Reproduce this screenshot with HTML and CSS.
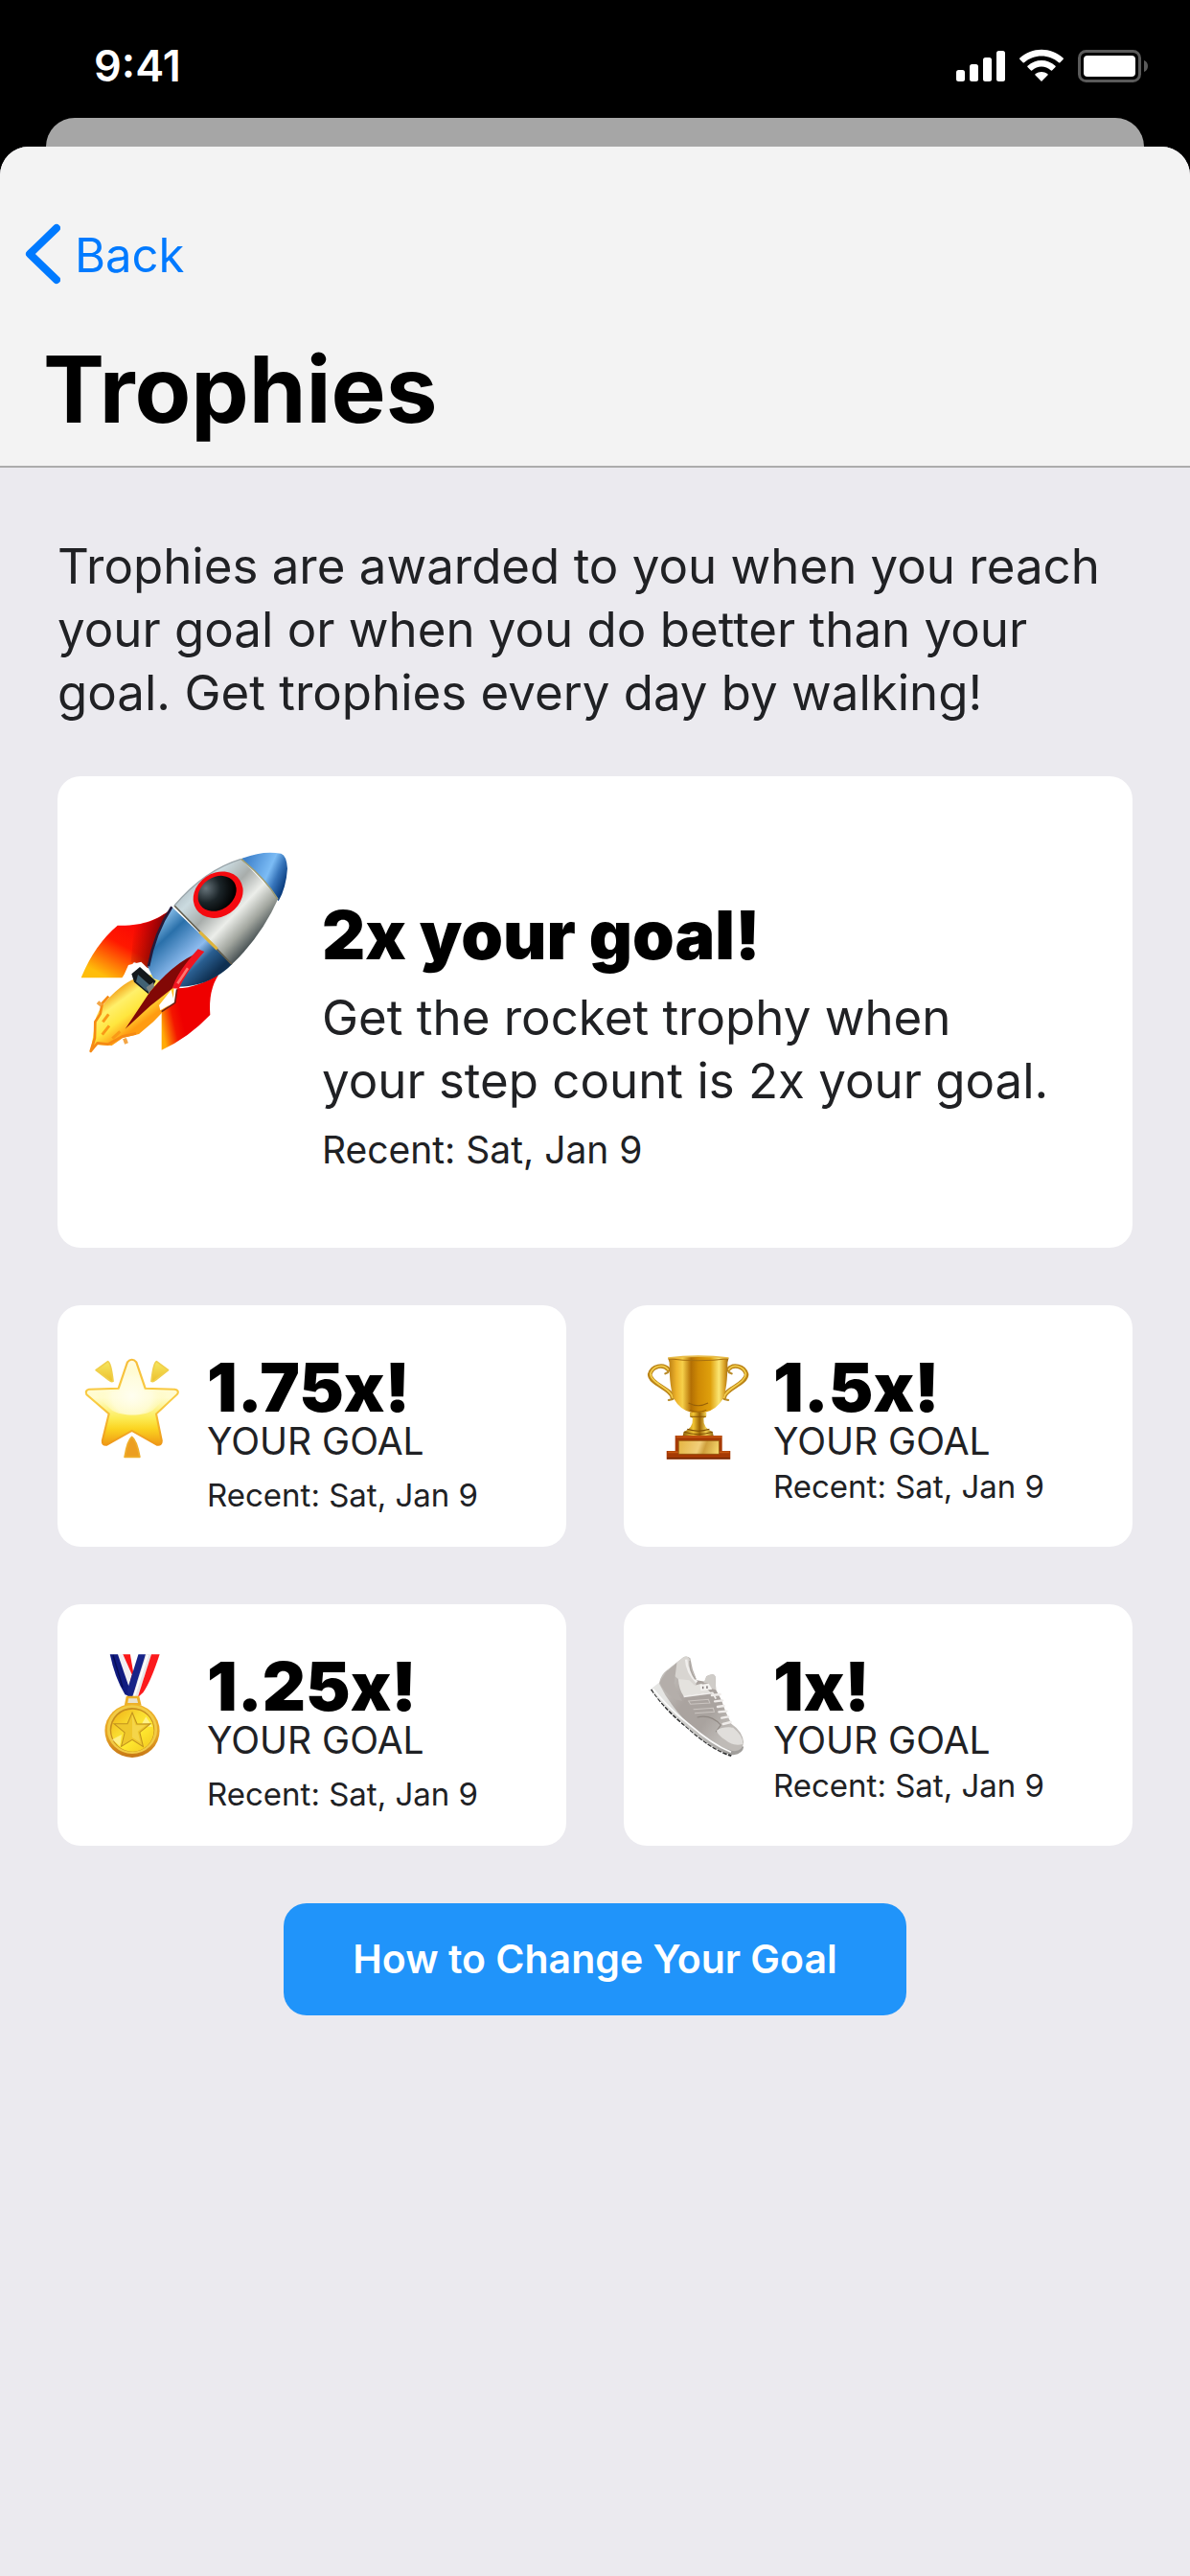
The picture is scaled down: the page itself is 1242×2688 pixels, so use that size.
FILE: index.html
```html
<!DOCTYPE html>
<html lang="en">
<head>
<meta charset="utf-8">
<meta name="viewport" content="width=device-width, initial-scale=1">
<title>Trophies</title>
<link rel="stylesheet" href="styles.css">
</head>
<body>
<div class="screen">
  <div class="status-bar">
    <span class="status-time">9:41</span>
    <svg class="status-icons" width="204" height="36" viewBox="0 0 204 36" role="img" aria-label="Signal, Wi-Fi and battery">
      <g fill="#fff">
        <rect x="2" y="22" width="9" height="12" rx="2.5"/>
        <rect x="16" y="16" width="9" height="18" rx="2.5"/>
        <rect x="30" y="9" width="9" height="25" rx="2.5"/>
        <rect x="44" y="2" width="9" height="32" rx="2.5"/>
        <path d="M91 34 L84.6 27.600Q83.800 26.800 84.700 26.100C88.500 23.200 93.500 23.200 97.300 26.100Q98.200 26.800 97.400 27.600Z"/>
        <path d="M76.500 19Q75.800 18.400 76.500 17.800C84.800 10 97.200 10 105.500 17.800Q106.200 18.400 105.500 19L102.300 22.300Q101.600 23 100.900 22.400C95 17.300 87 17.300 81.100 22.400Q80.400 23 79.700 22.300Z"/>
        <path d="M68.400 11Q67.700 10.300 68.400 9.600C81 -2.200 101 -2.200 113.600 9.600Q114.300 10.300 113.600 11L110.400 14.300Q109.700 14.900 109 14.300C99 5.200 83 5.200 73 14.300Q72.300 14.900 71.600 14.300Z"/>
        <rect x="135" y="7" width="54" height="22" rx="4"/>
      </g>
      <rect x="130.500" y="2.500" width="63" height="31" rx="7" fill="none" stroke="#5a5a5a" stroke-width="3"/>
      <path d="M198 12C201 13 202 15.500 202 18S201 23 198 24Z" fill="#5a5a5a"/>
    </svg>
  </div>
  <div class="sheet-behind"></div>
  <div class="sheet">
    <header class="nav">
      <a class="back" href="#">
        <svg width="38" height="64" viewBox="0 0 38 64" fill="none" stroke="#007aff" stroke-width="8" stroke-linecap="round" stroke-linejoin="round" aria-hidden="true"><path d="M34 5 6 32 34 59"/></svg>
        <span>Back</span>
      </a>
      <h1 class="page-title">Trophies</h1>
    </header>
    <main class="content">
      <p class="intro">Trophies are awarded to you when you reach your goal or when you do better than your goal. Get trophies every day by walking!</p>

      <div class="cards">
        <section class="card card-large">
          <svg class="rocket" viewBox="72 262 648 636" aria-hidden="true">
            <defs>
              <linearGradient id="hull" x1="420" y1="330" x2="640" y2="540" gradientUnits="userSpaceOnUse"><stop offset="0" stop-color="#a9b6bd"/><stop offset=".2" stop-color="#cbdbe0"/><stop offset=".42" stop-color="#a8adab"/><stop offset=".62" stop-color="#eceeea"/><stop offset=".8" stop-color="#a2a69f"/><stop offset="1" stop-color="#333e42"/></linearGradient>
              <linearGradient id="tail" x1="320" y1="470" x2="490" y2="650" gradientUnits="userSpaceOnUse"><stop offset="0" stop-color="#8fc4ee"/><stop offset=".25" stop-color="#2a70aa"/><stop offset=".62" stop-color="#8dbbee"/><stop offset=".78" stop-color="#2a5f91"/><stop offset="1" stop-color="#0f3052"/></linearGradient>
              <linearGradient id="nose" x1="590" y1="290" x2="725" y2="350" gradientUnits="userSpaceOnUse"><stop offset="0" stop-color="#3f82cc"/><stop offset=".55" stop-color="#7cbcf5"/><stop offset=".75" stop-color="#3775bb"/><stop offset="1" stop-color="#063778"/></linearGradient>
              <linearGradient id="finA" x1="270" y1="490" x2="170" y2="670" gradientUnits="userSpaceOnUse"><stop offset="0" stop-color="#f90505"/><stop offset=".45" stop-color="#ff1800"/><stop offset="1" stop-color="#ffbd0a"/></linearGradient>
              <linearGradient id="finShade" x1="230" y1="540" x2="345" y2="570" gradientUnits="userSpaceOnUse"><stop offset="0" stop-color="#700" stop-opacity="0"/><stop offset="1" stop-color="#4a0008"/></linearGradient>
              <linearGradient id="finB" x1="322" y1="800" x2="390" y2="785" gradientUnits="userSpaceOnUse"><stop offset="0" stop-color="#ffab05"/><stop offset=".6" stop-color="#f41500"/><stop offset="1" stop-color="#ef0000"/></linearGradient>
              <radialGradient id="port" cx="480" cy="365" r="90" gradientUnits="userSpaceOnUse"><stop offset="0" stop-color="#66737a"/><stop offset=".5" stop-color="#1b2428"/><stop offset="1" stop-color="#000"/></radialGradient>
              <linearGradient id="flame" x1="190" y1="690" x2="270" y2="800" gradientUnits="userSpaceOnUse"><stop offset="0" stop-color="#f3a119"/><stop offset=".3" stop-color="#fff06a"/><stop offset=".65" stop-color="#ffe63e"/><stop offset="1" stop-color="#ff9c12"/></linearGradient>
            </defs>
            <path d="M235 668C190 690 130 750 120 790L104 892 122 872 170 874 205 850 255 838 300 800 362 735 365 690 300 650Z" fill="url(#flame)"/>
            <path d="M160 720 140 742 134 775 118 800 117 850 104 892 125 866 158 870 202 846 246 836" fill="none" stroke="#f68a14" stroke-width="8" stroke-linejoin="round"/>
            <path d="M126 738 138 748M210 852 216 868" stroke="#f3a545" stroke-width="12"/>
            <path d="M140 840 162 812 M142 800 160 776 M172 852 196 830" fill="none" stroke="#f99a17" stroke-width="9"/>
            <path d="M188 498C270 500 310 480 355 448L330 560 284 632 240 612 202 662H74Q115 560 188 498Z" fill="url(#finA)"/>
            <path d="M240 496C290 492 320 475 355 448L330 560 284 632 230 612Z" fill="url(#finShade)"/>
            <path d="M222 622 262 612 282 632 250 640 226 664 206 658Z" fill="#fff"/>
            <path d="M375 695C420 695 465 675 505 652Q472 700 478 778 410 850 326 888V768L368 740Z" fill="url(#finB)"/>
            <path d="M356 700 366 738 322 764 318 748Z" fill="#fff"/>
            <path d="M326 768 368 740 374 698" fill="none" stroke="#6b1e12" stroke-width="5"/>
            <path d="M358 440 546 620C490 675 430 690 378 690L300 664 282 625Q310 510 358 440Z" fill="url(#tail)"/>
            <path d="M358 440Q305 520 285 626" fill="none" stroke="#241b3b" stroke-width="8"/>
            <path d="M366 436Q460 325 575 290L692 412Q640 530 546 620Z" fill="url(#hull)"/>
            <path d="M575 290Q640 262 700 273 718 280 720 320 716 380 692 422 650 350 575 290Z" fill="url(#nose)"/>
            <path d="M366 436 546 620" stroke="#5f5b4b" stroke-width="5"/>
            <path d="M445 518 500 572" stroke="#dfb43b" stroke-width="9"/>
            <path d="M575 290Q650 350 690 416" fill="none" stroke="#a09d73" stroke-width="5"/>
            <path d="M366 436Q460 325 575 290" fill="none" stroke="#9aa5aa" stroke-width="4"/>
            <ellipse cx="503" cy="402" rx="82" ry="68" transform="rotate(-34 503 402)" fill="#f50a10"/>
            <ellipse cx="500" cy="398" rx="64" ry="51" transform="rotate(-34 500 398)" fill="url(#port)"/>
            <path d="M232 650 258 628 308 672 284 712 240 675Z" fill="#14191d"/>
            <path d="M252 652 290 686 280 704 246 674Z" fill="#416274"/>
            <path d="M278 692 300 676 303 690 286 710Z" fill="#7c8585"/>
            <path d="M212 822 290 705Q360 620 430 588L375 665 360 695 290 750Z" fill="#820806"/>
            <path d="M360 695Q370 650 440 572L460 580Q405 640 380 696Z" fill="#f01520"/>
            <path d="M376 680 408 632" stroke="#ff7770" stroke-width="8"/>
          </svg>
          <div class="card-large-text">
            <h2 class="card-title">2x your goal!</h2>
            <p class="card-body">Get the rocket trophy when your step count is 2x your goal.</p>
            <p class="card-recent-large">Recent: Sat, Jan 9</p>
          </div>
        </section>

        <div class="card-grid">
          <section class="card card-small">
            <svg class="award" viewBox="95 189 302 342" preserveAspectRatio="none" aria-hidden="true">
              <defs>
                <linearGradient id="starFill" x1="0" y1="200" x2="0" y2="478" gradientUnits="userSpaceOnUse"><stop offset="0" stop-color="#fffbe0"/><stop offset=".45" stop-color="#fffcd0"/><stop offset=".68" stop-color="#fcec55"/><stop offset=".8" stop-color="#fbd421"/><stop offset="1" stop-color="#ee9413"/></linearGradient>
                <linearGradient id="starEdge" x1="0" y1="200" x2="0" y2="478" gradientUnits="userSpaceOnUse"><stop offset="0" stop-color="#f6bd3a"/><stop offset=".5" stop-color="#f9cd43"/><stop offset="1" stop-color="#ee9616"/></linearGradient>
                <linearGradient id="ray" x1="0" y1="208" x2="0" y2="278" gradientUnits="userSpaceOnUse"><stop offset="0" stop-color="#f6ea65"/><stop offset="1" stop-color="#ecbd28"/></linearGradient>
                <radialGradient id="starGlow" cx="245" cy="320" r="105" gradientUnits="userSpaceOnUse"><stop offset="0" stop-color="#fffef0"/><stop offset=".55" stop-color="#fffde0" stop-opacity=".8"/><stop offset="1" stop-color="#fff9b0" stop-opacity="0"/></radialGradient>
              </defs>
              <g stroke-linejoin="round" stroke-width="5">
                <path d="M140 239 175 212Q184 215 190 274 185 277 178 270Z" fill="url(#ray)" stroke="#f0cf4b"/>
                <path d="M351 239 317 212Q308 215 302 274 307 277 314 270Z" fill="url(#ray)" stroke="#f0cf4b"/>
                <path d="M245 448Q232 458 224 511H268Q259 458 245 448Z" fill="#ec9e20" stroke="#efae2b"/>
              </g>
              <path d="M232 214Q238 206 245 206T258 214L284 296 370 299Q384 302 378 314L316 376 332 460Q332 476 318 473L245 429 172 473Q158 476 159 460L178 376 113 316Q107 303 120 299L206 296Z" fill="url(#starFill)" stroke="url(#starEdge)" stroke-width="6" stroke-linejoin="round"/>
              <path d="M235 225Q245 210 255 225L281 304 358 310 306 365C280 384 215 384 187 365L132 310 209 304Z" fill="url(#starGlow)"/>
            </svg>
            <div class="card-small-text">
              <h2 class="card-title">1.75x!</h2>
              <p class="card-goal">YOUR GOAL</p>
              <p class="card-recent card-recent-low">Recent: Sat, Jan 9</p>
            </div>
          </section>

          <section class="card card-small">
            <svg class="award" viewBox="98 189 302 342" preserveAspectRatio="none" aria-hidden="true">
              <defs>
                <linearGradient id="cup" x1="160" y1="0" x2="337" y2="0" gradientUnits="userSpaceOnUse"><stop offset="0" stop-color="#b67a12"/><stop offset=".14" stop-color="#eeb42c"/><stop offset=".24" stop-color="#f6d04a"/><stop offset=".38" stop-color="#b36f04"/><stop offset=".5" stop-color="#cf8a05"/><stop offset=".7" stop-color="#dfa00c"/><stop offset=".84" stop-color="#fbe673"/><stop offset=".93" stop-color="#d9a024"/><stop offset="1" stop-color="#9a650c"/></linearGradient>
                <linearGradient id="plate" x1="190" y1="460" x2="308" y2="500" gradientUnits="userSpaceOnUse"><stop offset="0" stop-color="#e5b440"/><stop offset=".5" stop-color="#f1cf7a"/><stop offset=".65" stop-color="#cf9f3c"/><stop offset="1" stop-color="#f9dd70"/></linearGradient>
                <linearGradient id="stem" x1="202" y1="0" x2="294" y2="0" gradientUnits="userSpaceOnUse"><stop offset="0" stop-color="#8a5b08"/><stop offset=".35" stop-color="#f2c534"/><stop offset=".55" stop-color="#9c6404"/><stop offset=".75" stop-color="#f3cf50"/><stop offset="1" stop-color="#8a5b08"/></linearGradient>
              </defs>
              <g fill="none" stroke-linecap="round">
                <path d="M162 238C146 218 114 226 107 252 106 282 172 298 173 325M335 238C350 218 382 226 389 252 390 282 325 298 324 325" stroke="#bb8417" stroke-width="13"/>
                <path d="M160 237C146 218 116 226 109 250 108 280 172 298 173 325M337 237C350 218 380 226 387 250 389 280 325 298 324 325" stroke="#f3cd4c" stroke-width="5"/>
                <path d="M152 250 160 246M346 250 338 246M162 333 174 330M336 333 324 330" stroke="#b88a27" stroke-width="6"/>
              </g>
              <path d="M160 202Q248 188 337 202L334 215Q334 295 320 330 300 365 266 372H230Q196 365 178 330 164 295 164 215Z" fill="url(#cup)"/>
              <path d="M161 203Q248 215 336 203" fill="none" stroke="#a8700f" stroke-width="3"/>
              <path d="M160 201Q248 190 337 201" fill="none" stroke="#e8bd4d" stroke-width="5"/>
              <path d="M220 342Q248 358 277 342M224 364Q248 375 272 364" fill="none" stroke="#986108" stroke-width="3"/>
              <path d="M224 371H272V384L264 390Q262 420 290 432L294 450H202L206 432Q234 420 232 390L224 384Z" fill="url(#stem)"/>
              <path d="M225 385H271M207 433Q248 447 290 433M216 424Q248 435 281 424" fill="none" stroke="#825004" stroke-width="3"/>
              <path d="M181 444H318V492H342V518H156V492H181Z" fill="#a63a04"/>
              <path d="M184 448H316M160 496H339" stroke="#c75811" stroke-width="5"/>
              <path d="M157 515H341" stroke="#6c2505" stroke-width="4"/>
              <path d="M191 460H309V502H191Z" fill="url(#plate)" stroke="#88500a" stroke-width="2"/>
            </svg>
            <div class="card-small-text">
              <h2 class="card-title">1.5x!</h2>
              <p class="card-goal">YOUR GOAL</p>
              <p class="card-recent">Recent: Sat, Jan 9</p>
            </div>
          </section>

          <section class="card card-small">
            <svg class="award" viewBox="95 195 302 342" preserveAspectRatio="none" aria-hidden="true">
              <defs>
                <linearGradient id="medalRim" x1="0" y1="350" x2="0" y2="522" gradientUnits="userSpaceOnUse"><stop offset="0" stop-color="#efb52c"/><stop offset=".6" stop-color="#e5a325"/><stop offset="1" stop-color="#c67616"/></linearGradient>
                <linearGradient id="medalFace" x1="195" y1="385" x2="300" y2="490" gradientUnits="userSpaceOnUse"><stop offset="0" stop-color="#f2b91b"/><stop offset=".35" stop-color="#f9dc31"/><stop offset=".6" stop-color="#ffe931"/><stop offset="1" stop-color="#f5cd20"/></linearGradient>
              </defs>
              <path d="M218 199H240L262 333 244 310Z" fill="#fa1718"/>
              <path d="M203 199H219L245 262 236 300Z" fill="#f2f0f2"/>
              <path d="M181 199H204L240 312 246 333 225 325Q196 275 181 199Z" fill="#111b80"/>
              <path d="M190 201 218 302" stroke="#070d55" stroke-width="4"/>
              <path d="M284 199H303L262 331H246Z" fill="#e9e7ea"/>
              <path d="M264 199H285L246 334H233L232 308Z" fill="#172388"/>
              <path d="M302 199H326Q300 285 278 318L262 334Z" fill="#fb1a1d"/>
              <path d="M291 201 252 329" stroke="#fff" stroke-width="5"/>
              <path d="M228 355 232 333H263L268 355Z" fill="#e9e3cf" stroke="#edaf28" stroke-width="8"/>
              <ellipse cx="246" cy="438" rx="80" ry="84" fill="url(#medalRim)"/>
              <ellipse cx="246" cy="434" rx="73" ry="76" fill="#f2cb45"/>
              <ellipse cx="246" cy="435" rx="65" ry="69" fill="#c68d1d"/>
              <ellipse cx="247" cy="437" rx="62" ry="66" fill="url(#medalFace)"/>
              <path d="M286 394 305 425 270 424ZM187 466 215 450 210 485Z" fill="#fff6ad" opacity=".7"/>
              <path d="M246 381 260 417 299 416 268 443 278 488 246 466 214 487 224 444 193 416 232 416Z" fill="#efc72c" stroke="#c2931e" stroke-width="3"/>
              <path d="M246 388 256 421 286 421 262 440 270 475 246 459Z" fill="#f8dc55" opacity=".7"/>
            </svg>
            <div class="card-small-text">
              <h2 class="card-title">1.25x!</h2>
              <p class="card-goal">YOUR GOAL</p>
              <p class="card-recent card-recent-low">Recent: Sat, Jan 9</p>
            </div>
          </section>

          <section class="card card-small">
            <svg class="award" viewBox="98 195 302 342" preserveAspectRatio="none" aria-hidden="true">
              <defs>
                <linearGradient id="shoe" x1="140" y1="300" x2="340" y2="430" gradientUnits="userSpaceOnUse"><stop offset="0" stop-color="#c1bdb9"/><stop offset=".35" stop-color="#aaa39f"/><stop offset=".7" stop-color="#a9a39f"/><stop offset="1" stop-color="#bfbbb7"/></linearGradient>
                <linearGradient id="sole" x1="150" y1="340" x2="340" y2="510" gradientUnits="userSpaceOnUse"><stop offset="0" stop-color="#e5e5e3"/><stop offset=".5" stop-color="#c6c5c2"/><stop offset="1" stop-color="#a09e9b"/></linearGradient>
              </defs>
              <path d="M112 308Q160 380 214 424 285 495 345 516" fill="none" stroke="#2f3031" stroke-width="7" stroke-dasharray="13 4"/>
              <path d="M112 306 133 288 345 470 381 488Q379 508 352 514 300 508 214 425 130 345 112 306Z" fill="url(#sole)"/>
              <path d="M134 290Q138 262 160 246L206 207Q216 202 225 211L232 246 244 280 268 284 272 268Q294 256 298 268L300 310 316 342 328 378 345 416Q378 440 381 475 378 500 354 502 310 492 245 443 170 370 134 290Z" fill="url(#shoe)"/>
              <path d="M158 248 206 207Q216 202 222 212L229 248 244 282 240 300 190 276Z" fill="#d8d5d1"/>
              <path d="M156 252 186 225 178 290Q190 325 202 345L180 340Q140 310 136 286Z" fill="#b4aeaa"/>
              <path d="M190 276 222 280 238 296 258 290 284 318 206 330Q192 310 190 276Z" fill="#e4e2de"/>
              <path d="M206 331 290 319 300 338" fill="none" stroke="#f1efed" stroke-width="5"/>
              <path d="M213 215Q215 255 244 286" fill="none" stroke="#f1efed" stroke-width="7"/>
              <path d="M224 219Q222 250 240 277" fill="none" stroke="#a9a49f" stroke-width="4"/>
              <path d="M272 268Q294 256 298 268L300 310 286 306 278 290 264 288Z" fill="#cfccc8"/>
              <path d="M253 294 279 290 289 308 256 313Z" fill="#f5f3f1"/>
              <path d="M262 299V307M274 298V306" stroke="#81797a" stroke-width="4"/>
              <path d="M288 327 312 324M297 346 319 343M305 363 323 360M309 379 331 377M317 398 336 394M321 417 343 411" stroke="#efecea" stroke-width="7" stroke-linecap="round"/>
              <path d="M220 345 278 340 282 351 226 355ZM234 371 292 367 295 379 238 383" fill="none" stroke="#cbc5c1" stroke-width="3"/>
              <path d="M245 396Q285 385 314 420L300 442" fill="none" stroke="#8e8782" stroke-width="3"/>
              <path d="M302 437Q320 424 350 428 380 454 379 480 350 488 326 466 304 450 302 437Z" fill="#e0dedb"/>
              <path d="M116 307Q165 372 222 418 288 480 344 505" fill="none" stroke="#fafafa" stroke-width="5"/>
            </svg>
            <div class="card-small-text">
              <h2 class="card-title">1x!</h2>
              <p class="card-goal">YOUR GOAL</p>
              <p class="card-recent">Recent: Sat, Jan 9</p>
            </div>
          </section>
        </div>

        <button class="cta" type="button">How to Change Your Goal</button>
      </div>
    </main>
  </div>
</div>
</body>
</html>
```
FILE: styles.css
```css
* {
  box-sizing: border-box;
}

body {
  margin: 0;
  background: #000;
  color: #202124;
  font-family: Inter, "Liberation Sans", sans-serif;
}

h1, h2, p {
  margin: 0;
}

.screen {
  display: flex;
  flex-direction: column;
  min-height: 100vh;
}

.status-bar {
  display: flex;
  justify-content: space-between;
  align-items: center;
  height: 123px;
  padding: 14px 42px 0 98px;
}

.status-time {
  color: #fff;
  font-size: 45px;
  font-weight: 600;
  line-height: 54px;
}

.sheet-behind {
  height: 30px;
  margin: 0 48px;
  border-radius: 30px 30px 0 0;
  background: #a6a6a6;
}

.sheet {
  display: flex;
  flex: 1;
  flex-direction: column;
  overflow: hidden;
  border-radius: 30px 30px 0 0;
  background: #ebeaef;
}

.nav {
  display: flex;
  flex-direction: column;
  align-items: flex-start;
  gap: 44px;
  padding: 80px 48px 19px 25px;
  border-bottom: 2px solid #acacac;
  background: #f3f3f3;
}

.back {
  display: flex;
  align-items: flex-start;
  gap: 15px;
  color: #007aff;
  font-size: 49px;
  line-height: 68px;
  text-decoration: none;
}

.page-title {
  padding-left: 20px;
  color: #000;
  font-size: 96px;
  font-weight: 700;
  line-height: 122px;
}

.content {
  display: flex;
  flex-direction: column;
  gap: 54px;
  padding: 70px 60px 60px;
}

.intro {
  font-size: 51px;
  line-height: 66px;
}

.cards {
  display: flex;
  flex-direction: column;
  gap: 60px;
}

.card {
  display: flex;
  align-items: flex-start;
  border-radius: 24px;
  background: #fff;
}

.card-large {
  gap: 36px;
  min-height: 492px;
  padding: 0 60px 0 24px;
}

.rocket {
  flex: none;
  width: 216px;
  height: 212px;
  margin-top: 77px;
}

.card-large-text {
  display: flex;
  flex-direction: column;
  gap: 15px;
  max-width: 764px;
  padding: 128px 0 76px;
}

.card-title {
  color: #000;
  font-size: 70px;
  font-weight: 900;
  line-height: 76px;
}

.card-body {
  font-size: 51px;
  line-height: 66px;
}

.card-recent-large {
  font-size: 39px;
  line-height: 48px;
}

.card-grid {
  display: grid;
  grid-template-columns: 1fr 1fr;
  gap: 60px;
}

.card-small {
  gap: 24px;
  min-height: 252px;
  padding: 0 24px;
}

.award {
  flex: none;
  width: 108px;
  height: 114px;
  margin-top: 51px;
}

.card-small-text {
  padding-top: 48px;
}

.card-goal {
  font-size: 39px;
  line-height: 36px;
}

.card-recent {
  margin-top: 9px;
  font-size: 33px;
  line-height: 40px;
}

.card-recent-low {
  margin-top: 18px;
}

.cta {
  align-self: center;
  padding: 32px 72px 33px;
  border: 0;
  border-radius: 24px;
  background: #2094fa;
  color: #fff;
  font-family: inherit;
  font-size: 41px;
  font-weight: 600;
  line-height: 52px;
}
```
